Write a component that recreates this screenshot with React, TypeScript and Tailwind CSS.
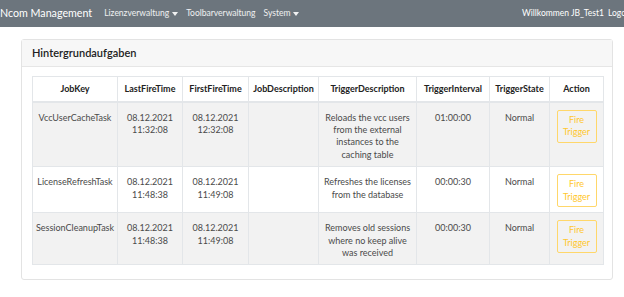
import React from 'react';

const jobs = [
  {
    key: 'VccUserCacheTask',
    last: ['08.12.2021', '11:32:08'],
    first: ['08.12.2021', '12:32:08'],
    trigger: 'Reloads the vcc users from the external instances to the caching table',
    interval: '01:00:00',
  },
  {
    key: 'LicenseRefreshTask',
    last: ['08.12.2021', '11:48:38'],
    first: ['08.12.2021', '11:49:08'],
    trigger: 'Refreshes the licenses from the database',
    interval: '00:00:30',
  },
  {
    key: 'SessionCleanupTask',
    last: ['08.12.2021', '11:48:38'],
    first: ['08.12.2021', '11:49:08'],
    trigger: 'Removes old sessions where no keep alive was received',
    interval: '00:00:30',
  },
];

const headers = [
  { label: 'JobKey', w: 'w-[85px]' },
  { label: 'LastFireTime', w: 'w-[65px]' },
  { label: 'FirstFireTime', w: 'w-[66px]' },
  { label: 'JobDescription', w: 'w-[70px]' },
  { label: 'TriggerDescription', w: 'w-[98px]' },
  { label: 'TriggerInterval', w: 'w-[73px]' },
  { label: 'TriggerState', w: 'w-[60px]' },
  { label: 'Action', w: 'w-[54px]' },
];

function Caret() {
  return <span className="inline-block ml-[3px] align-middle border-t-[4px] border-x-[3px] border-x-transparent border-t-white/90 w-0 h-0" />;
}

const td = 'border border-[#e3e6e9] align-top pt-[9px] pb-[5px] px-[2px]';

export default function App() {
  return (
    <div className="w-[624px] h-[297px] bg-white overflow-hidden font-['Lato',sans-serif]">
      <nav className="h-[27px] bg-[#6c757d] flex items-center whitespace-nowrap">
        <span className="text-white text-[10.7px] mr-[12px]">Ncom Management</span>
        <span className="text-white/90 text-[8.5px] mr-[8px]">Lizenzverwaltung<Caret /></span>
        <span className="text-white/90 text-[8.5px] mr-[8px]">Toolbarverwaltung</span>
        <span className="text-white/90 text-[8.5px]">System<Caret /></span>
        <span className="ml-auto text-white text-[8.5px] mr-[4px]">Willkommen JB_Test1</span>
        <span className="text-white text-[8.5px] w-[16px] overflow-hidden">Logout</span>
      </nav>

      <div className="pt-[12px] pl-[21px] pr-[11px]">
        <div className="border border-[#e3e3e3] rounded-[3px] w-[592px] h-[241px]">
          <div className="h-[27px] bg-[#f7f7f7] border-b border-[#e6e6e6] px-[10px] flex items-center">
            <span className="text-[11px] font-semibold text-[#222]">Hintergrundaufgaben</span>
          </div>
          <div className="px-[10px] pt-[9px]">
            <table className="border-collapse text-[9px] leading-[12.4px] text-[#4a4a4a] text-center table-fixed w-[571px]">
              <thead>
                <tr className="h-[25px]">
                  {headers.map((h) => (
                    <th key={h.label} className={`${h.w} border border-[#e3e6e9] border-b-2 font-bold text-[#222] px-0 align-middle whitespace-nowrap`}>
                      {h.label}
                    </th>
                  ))}
                </tr>
              </thead>
              <tbody>
                {jobs.map((j, i) => (
                  <tr key={j.key} className={i % 2 === 0 ? 'bg-[#f2f2f2]' : 'bg-white'}>
                    <td className={`${td} whitespace-nowrap`}>{j.key}</td>
                    <td className={td}>{j.last[0]}<br />{j.last[1]}</td>
                    <td className={td}>{j.first[0]}<br />{j.first[1]}</td>
                    <td className="border border-[#e3e6e9] align-top"></td>
                    <td className="border border-[#e3e6e9] align-top pt-[9px] pb-[5px] px-[3px]">{j.trigger}</td>
                    <td className={td}>{j.interval}</td>
                    <td className={td}>Normal</td>
                    <td className="border border-[#e3e6e9] align-top pt-[7px] pb-[5px] px-[2px]">
                      <button className="w-[40px] h-[33px] border border-[#ffd76a] rounded-[2px] text-[#ffc72c] leading-[12.4px] bg-transparent">
                        Fire<br />Trigger
                      </button>
                    </td>
                  </tr>
                ))}
              </tbody>
            </table>
          </div>
        </div>
      </div>
    </div>
  );
}
